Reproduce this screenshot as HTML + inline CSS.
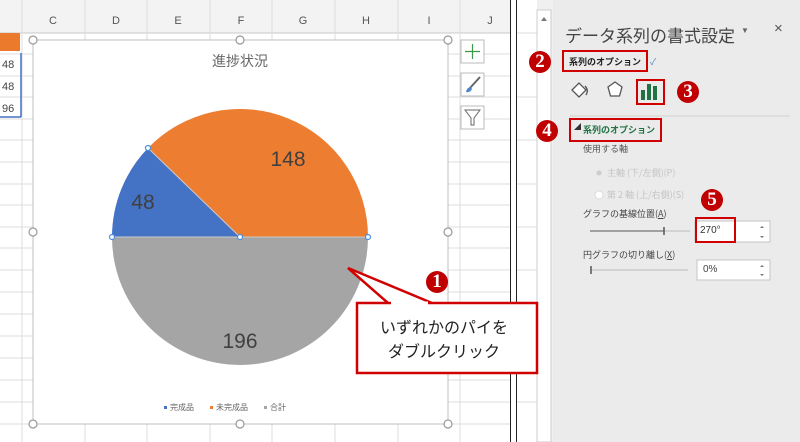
<!DOCTYPE html>
<html><head><meta charset="utf-8"><style>
*{margin:0;padding:0;box-sizing:border-box}
body{width:800px;height:442px;overflow:hidden;background:#fff;font-family:"Liberation Sans","Noto Sans CJK JP",sans-serif;position:relative}
.a{position:absolute}
.t{position:absolute;white-space:nowrap}
.num{position:absolute;width:22px;height:22px;border-radius:50%;background:#c00000;color:#fff;font-family:"Liberation Serif",serif;font-weight:bold;font-size:19px;line-height:22px;text-align:center}
.rb{position:absolute;border:2.5px solid #d00000}
</style></head><body>
<svg class="a" style="left:0;top:0" width="800" height="442">
<rect x="0" y="0" width="510" height="33" fill="#f3f3f3"/>
<g stroke="#dcdcdc" stroke-width="1">
<line x1="0" y1="33" x2="510" y2="33" stroke="#c8c8c8"/>
<line x1="0" y1="54" x2="510" y2="54"/><line x1="0" y1="76" x2="510" y2="76"/><line x1="0" y1="97" x2="510" y2="97"/><line x1="0" y1="119" x2="510" y2="119"/><line x1="0" y1="140" x2="510" y2="140"/><line x1="0" y1="162" x2="510" y2="162"/><line x1="0" y1="184" x2="510" y2="184"/><line x1="0" y1="205" x2="510" y2="205"/><line x1="0" y1="227" x2="510" y2="227"/><line x1="0" y1="248" x2="510" y2="248"/><line x1="0" y1="270" x2="510" y2="270"/><line x1="0" y1="292" x2="510" y2="292"/><line x1="0" y1="314" x2="510" y2="314"/><line x1="0" y1="336" x2="510" y2="336"/><line x1="0" y1="358" x2="510" y2="358"/><line x1="0" y1="380" x2="510" y2="380"/><line x1="0" y1="402" x2="510" y2="402"/><line x1="0" y1="424" x2="510" y2="424"/>
<line x1="22" y1="0" x2="22" y2="442"/><line x1="85" y1="0" x2="85" y2="442"/><line x1="147" y1="0" x2="147" y2="442"/><line x1="210" y1="0" x2="210" y2="442"/><line x1="272" y1="0" x2="272" y2="442"/><line x1="335" y1="0" x2="335" y2="442"/><line x1="398" y1="0" x2="398" y2="442"/><line x1="460" y1="0" x2="460" y2="442"/>
</g>
<g font-size="11" fill="#555" text-anchor="middle" font-family="Liberation Sans">
<text x="53" y="24">C</text><text x="116" y="24">D</text><text x="178" y="24">E</text><text x="241" y="24">F</text><text x="303" y="24">G</text><text x="366" y="24">H</text><text x="429" y="24">I</text><text x="490" y="24">J</text>
</g>
<rect x="0" y="33" width="20" height="18" fill="#ec7a2c"/>
<g font-size="11" fill="#444"><text x="2" y="68">48</text><text x="2" y="90">48</text><text x="2" y="112">96</text></g>
<line x1="21" y1="53" x2="21" y2="117" stroke="#4472c4" stroke-width="1.5"/>
<line x1="0" y1="117" x2="21" y2="117" stroke="#4472c4" stroke-width="1.5"/>
<rect x="33" y="40" width="415" height="384" fill="#fff" stroke="#bfbfbf"/>
<text x="240" y="66" font-size="14" fill="#666" text-anchor="middle" font-family="Noto Sans CJK JP">進捗状況</text>
<path d="M240 237 L368 237 A128 128 0 0 1 112 237 Z" fill="#a5a5a5"/>
<path d="M240 237 L148 148 A128 128 0 0 1 368 237 Z" fill="#ed7d31"/>
<path d="M240 237 L112 237 A128 128 0 0 1 148 148 Z" fill="#4472c4"/>
<line x1="112" y1="237" x2="368" y2="237" stroke="#ccc"/>
<line x1="240" y1="237" x2="148" y2="148" stroke="#ccc"/>
<g fill="#fff" stroke="#4a90e2" stroke-width="1.2"><circle cx="112" cy="237" r="2.5"/><circle cx="240" cy="237" r="2.5"/><circle cx="368" cy="237" r="2.5"/><circle cx="148" cy="148" r="2.5"/></g>
<g font-size="21" fill="#404040" text-anchor="middle" font-family="Liberation Sans"><text x="143" y="209">48</text><text x="288" y="166">148</text><text x="240" y="348">196</text></g>
<g font-size="8" fill="#666" font-family="Noto Sans CJK JP"><rect x="164" y="406" width="3" height="3" fill="#4472c4"/><text x="170" y="410">完成品</text><rect x="210" y="406" width="3" height="3" fill="#ed7d31"/><text x="216" y="410">未完成品</text><rect x="264" y="406" width="3" height="3" fill="#a5a5a5"/><text x="270" y="410">合計</text></g>
<g fill="#fff" stroke="#999" stroke-width="1.2"><circle cx="33" cy="40" r="4"/><circle cx="240" cy="40" r="4"/><circle cx="448" cy="40" r="4"/><circle cx="33" cy="232" r="4"/><circle cx="448" cy="232" r="4"/><circle cx="33" cy="424" r="4"/><circle cx="240" cy="424" r="4"/><circle cx="448" cy="424" r="4"/></g>
<g fill="#fff" stroke="#bbb"><rect x="461" y="40" width="23" height="23"/><rect x="461" y="73" width="23" height="23"/><rect x="461" y="106" width="23" height="23"/></g>
<path d="M472.5 44v15M465 51.5h15" stroke="#3a9a4a" stroke-width="1.2"/>
<path d="M480 77 L470 88" stroke="#666" stroke-width="2"/><path d="M466 92 q1 -5 5 -5 l1 2 q-2 4 -6 3z" fill="#4a86c8"/>
<path d="M465 110h15l-6 8v7h-3v-7z" fill="none" stroke="#666"/>
<rect x="510" y="0" width="7" height="442" fill="#fff"/>
<line x1="510.5" y1="0" x2="510.5" y2="442" stroke="#222"/>
<line x1="516.5" y1="0" x2="516.5" y2="442" stroke="#222"/>
<rect x="517" y="0" width="283" height="442" fill="#f0f0f0"/>
<rect x="517" y="0" width="20" height="442" fill="#fff"/>
<g stroke="#ddd"><line x1="517" y1="33" x2="537" y2="33"/><line x1="517" y1="97" x2="537" y2="97"/><line x1="517" y1="140" x2="537" y2="140"/><line x1="517" y1="184" x2="537" y2="184"/><line x1="517" y1="227" x2="537" y2="227"/><line x1="517" y1="270" x2="537" y2="270"/><line x1="517" y1="314" x2="537" y2="314"/><line x1="517" y1="358" x2="537" y2="358"/><line x1="517" y1="402" x2="537" y2="402"/></g>
<rect x="537" y="10" width="14" height="432" fill="#fff" stroke="#ccc"/>
<path d="M541 21l3 -4 3 4z" fill="#777"/>
<rect x="553" y="0" width="247" height="442" fill="#ebebeb"/>
<line x1="570" y1="116" x2="790" y2="116" stroke="#d0d0d0"/>
<path d="M572 90 l7 -7 7 7 -7 7z" fill="#fff" stroke="#555" stroke-width="1.3"/><path d="M585 86 q4 4 1 9" fill="none" stroke="#555" stroke-width="1.3"/>
<path d="M615 82 l7 5 -2.5 9 h-9 l-2.5 -9z" fill="#fff" stroke="#555" stroke-width="1.3"/>
<rect x="641" y="90" width="4" height="10" fill="#217346"/><rect x="647" y="84" width="4" height="16" fill="#217346"/><rect x="653" y="86" width="4" height="14" fill="#217346"/>
<line x1="590" y1="231" x2="664" y2="231" stroke="#555"/><line x1="664" y1="231" x2="690" y2="231" stroke="#bbb"/><line x1="664" y1="227" x2="664" y2="235" stroke="#555" stroke-width="1.5"/>
<line x1="591" y1="270" x2="688" y2="270" stroke="#bbb"/><line x1="591" y1="266" x2="591" y2="274" stroke="#555" stroke-width="1.5"/>
<rect x="695" y="221" width="75" height="21" fill="#fff" stroke="#c6c6c6"/>
<rect x="697" y="260" width="73" height="20" fill="#fff" stroke="#c6c6c6"/>
<g fill="#777"><path d="M760 228l2 -2 2 2z"/><path d="M760 236l2 2 2 -2z"/><path d="M760 267l2 -2 2 2z"/><path d="M760 274l2 2 2 -2z"/></g>
<circle cx="599" cy="173" r="2.5" fill="#ccc"/><circle cx="599" cy="195" r="4" fill="#fff" stroke="#ddd"/>
<path d="M388 303 L348 268 L432 303" fill="#fff" stroke="#d00000" stroke-width="2.5" stroke-linejoin="miter"/>
<rect x="357" y="303" width="180" height="70" fill="#fff" stroke="#d00000" stroke-width="2.5"/>
<line x1="391" y1="303" x2="428" y2="303" stroke="#fff" stroke-width="3"/>
<text x="444" y="333" font-size="16" fill="#222" text-anchor="middle" font-family="Noto Sans CJK JP">いずれかのパイを</text>
<text x="444" y="357" font-size="16" fill="#222" text-anchor="middle" font-family="Noto Sans CJK JP">ダブルクリック</text>
</svg>
<div class="t" style="left:565px;top:22px;font-size:17px;color:#444;font-family:'Noto Sans CJK JP',sans-serif">データ系列の書式設定</div>
<div class="t" style="left:741px;top:26px;font-size:8px;color:#666">▼</div>
<div class="t" style="left:774px;top:20px;font-size:15px;color:#555">×</div>
<div class="t" style="left:569px;top:55px;font-size:9px;font-weight:bold;color:#222;font-family:'Noto Sans CJK JP',sans-serif">系列のオプション</div>
<div class="t" style="left:650px;top:55px;font-size:9px;color:#4a86c8">✓</div>
<div class="rb" style="left:562px;top:50px;width:86px;height:22px"></div>
<div class="rb" style="left:636px;top:79px;width:29px;height:26px"></div>
<div class="t" style="left:574px;top:122px;font-size:7px;color:#333">◢</div>
<div class="t" style="left:583px;top:123px;font-size:9px;font-weight:bold;color:#217346;font-family:'Noto Sans CJK JP',sans-serif">系列のオプション</div>
<div class="rb" style="left:569px;top:118px;width:93px;height:24px"></div>
<div class="t" style="left:583px;top:142px;font-size:9px;color:#555;font-family:'Noto Sans CJK JP',sans-serif">使用する軸</div>
<div class="t" style="left:607px;top:166px;font-size:9px;color:#c4c4c4;font-family:'Noto Sans CJK JP',sans-serif">主軸 (下/左側)(P)</div>
<div class="t" style="left:607px;top:188px;font-size:9px;color:#c4c4c4;font-family:'Noto Sans CJK JP',sans-serif">第 2 軸 (上/右側)(S)</div>
<div class="t" style="left:583px;top:207px;font-size:9px;color:#444;font-family:'Noto Sans CJK JP',sans-serif">グラフの基線位置(<u>A</u>)</div>
<div class="t" style="left:700px;top:225px;font-size:10px;color:#333">270°</div>
<div class="rb" style="left:695px;top:217px;width:41px;height:26px"></div>
<div class="t" style="left:583px;top:248px;font-size:9px;color:#444;font-family:'Noto Sans CJK JP',sans-serif">円グラフの切り離し(<u>X</u>)</div>
<div class="t" style="left:703px;top:264px;font-size:10px;color:#444">0%</div>
<div class="num" style="left:426px;top:271px">1</div>
<div class="num" style="left:529px;top:51px">2</div>
<div class="num" style="left:677px;top:81px">3</div>
<div class="num" style="left:536px;top:120px">4</div>
<div class="num" style="left:701px;top:189px">5</div>
</body></html>
